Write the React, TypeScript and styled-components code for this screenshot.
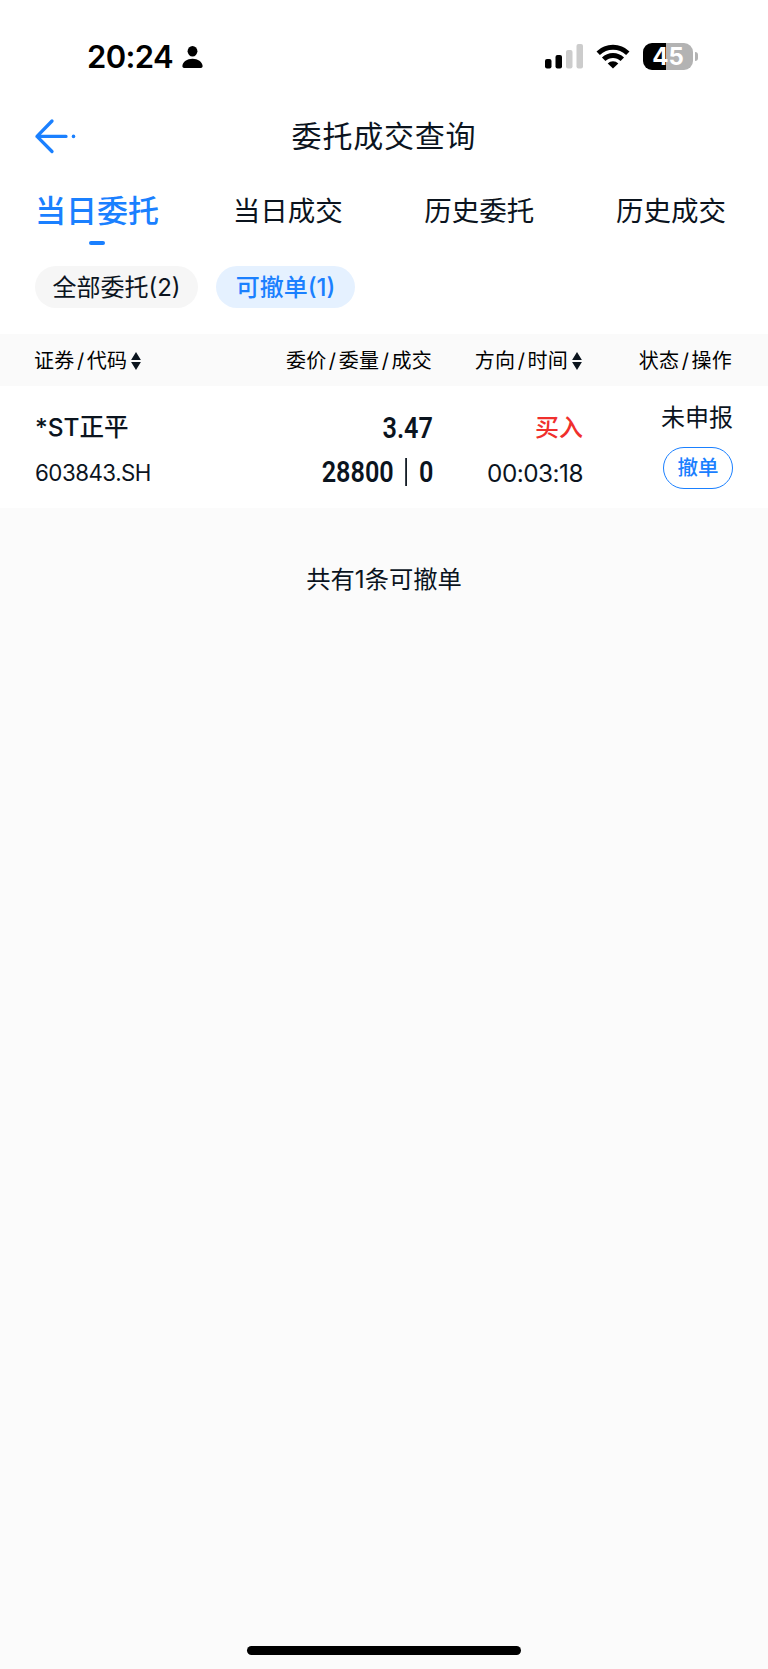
import React, { FC, PropsWithChildren } from "react";
import styled, { createGlobalStyle, css } from "styled-components";

const Color = {
  primary: "#1a80ff",
  primarySoft: "#e5f1ff",
  text: "#0b141e",
  buy: "#f02f2c",
  surface: "#ffffff",
  muted: "#f6f6f6",
  header: "#fafafa",
  page: "#fbfbfb",
};

const FONT_UI = `Inter, "Noto Sans CJK SC", sans-serif`;
const FONT_NUMBER = `Roboto, "Noto Sans CJK SC", sans-serif`;

const GlobalStyle = createGlobalStyle`
  * {
    box-sizing: border-box;
  }

  body {
    margin: 0;
    background: ${Color.page};
    color: ${Color.text};
    font-family: ${FONT_UI};
  }

  button {
    margin: 0;
    padding: 0;
    border: 0;
    background: none;
    color: inherit;
    font: inherit;
    white-space: nowrap;
  }
`;

const Screen = styled.div`
  display: flex;
  flex-direction: column;
  width: 768px;
  height: 1669px;
  background: ${Color.page};
`;

const StatusBar = styled.div`
  display: flex;
  align-items: center;
  justify-content: space-between;
  height: 113px;
  padding: 0 70px 0 87px;
  background: ${Color.surface};
`;

const StatusGroup = styled.div<{ $gap: number }>`
  display: flex;
  align-items: center;
  gap: ${({ $gap }) => $gap}px;
`;

const Clock = styled.span`
  color: #000;
  font-size: 31px;
  font-weight: 600;
  line-height: 36px;
  letter-spacing: -0.6px;
`;

const Battery = styled.div`
  display: flex;
  align-items: center;
  gap: 2px;
`;

const BatteryBody = styled.div<{ $level: number }>`
  width: 50px;
  height: 27px;
  border-radius: 9px;
  background: linear-gradient(
    to right,
    #000 ${({ $level }) => $level}%,
    #b3b3b3 ${({ $level }) => $level}%
  );
  color: #fff;
  font-size: 24px;
  font-weight: 700;
  line-height: 27px;
  text-align: center;
`;

const BatteryCap = styled.div`
  width: 3px;
  height: 9px;
  border-radius: 0 3px 3px 0;
  background: #b3b3b3;
`;

const NavBar = styled.header`
  display: grid;
  grid-template-columns: 100px 1fr 100px;
  align-items: center;
  height: 46px;
  padding: 0 34px;
  background: ${Color.surface};
`;

const BackButton = styled.button`
  display: flex;
`;

const Title = styled.h1`
  margin: 0;
  font-size: 30px;
  font-weight: 400;
  line-height: 44px;
  letter-spacing: 0.8px;
  text-align: center;
`;

const TabBar = styled.nav`
  display: flex;
  justify-content: space-between;
  height: 107px;
  padding: 30px 42px 0 35px;
  background: ${Color.surface};
`;

const Tab = styled.button<{ $active?: boolean }>`
  display: flex;
  flex-direction: column;
  align-items: center;
  gap: 8px;
  height: 60px;
  font-size: 27.5px;
  line-height: 44px;

  ${({ $active }) =>
    $active &&
    css`
      margin-right: -8px;
      color: ${Color.primary};
      font-size: 31px;
      font-weight: 500;

      &::after {
        content: "";
        width: 16px;
        height: 4px;
        border-radius: 2px;
        background: ${Color.primary};
      }
    `}
`;

const FilterBar = styled.div`
  display: flex;
  gap: 18px;
  height: 68px;
  padding: 0 35px;
  background: ${Color.surface};
`;

const Chip = styled.button<{ $active?: boolean; $width: number }>`
  width: ${({ $width }) => $width}px;
  height: 42px;
  border-radius: 21px;
  background: ${({ $active }) => ($active ? Color.primarySoft : Color.muted)};
  color: ${({ $active }) => ($active ? Color.primary : Color.text)};
  font-size: 24px;
  font-weight: ${({ $active }) => ($active ? 500 : 400)};
  line-height: 44px;
`;

const COLUMNS = "180px 218px 150px 150px";

const TableHead = styled.div`
  display: grid;
  grid-template-columns: ${COLUMNS};
  align-items: center;
  height: 52px;
  padding: 2px 35px 0 34px;
  background: ${Color.header};
  color: #000;
  font-size: 20px;
  line-height: 30px;
  letter-spacing: 0.2px;
`;

const HeadCell = styled.div<{ $end?: boolean }>`
  display: flex;
  align-items: center;
  justify-content: ${({ $end }) => ($end ? "flex-end" : "flex-start")};
  gap: 4px;
  white-space: nowrap;
`;

const Slash = styled.span`
  margin: 0 2.5px;
`;

const OrderRow = styled.div`
  display: grid;
  grid-template-columns: ${COLUMNS};
  height: 122px;
  padding: 0 35px;
  background: ${Color.surface};
`;

const Cell = styled.div<{ $end?: boolean }>`
  display: flex;
  flex-direction: column;
  align-items: ${({ $end }) => ($end ? "flex-end" : "flex-start")};
  padding-top: 20px;
  white-space: nowrap;
`;

const Name = styled.div`
  font-size: 24.5px;
  font-weight: 500;
  line-height: 42px;
`;

const Detail = styled.div<{ $size: number; $lineHeight: number }>`
  font-size: ${({ $size }) => $size}px;
  line-height: ${({ $lineHeight }) => $lineHeight}px;
  letter-spacing: -0.5px;
`;

const Figure = styled.div`
  display: flex;
  align-items: center;
  font-family: ${FONT_NUMBER};
  font-size: 29px;
  font-weight: 600;
  line-height: 44px;
  transform: scaleX(0.87);
  transform-origin: right center;
`;

const Divider = styled.span`
  width: 2px;
  height: 28px;
  margin: 0 14px 0 13px;
  background: ${Color.text};
`;

const Direction = styled.div`
  color: ${Color.buy};
  font-size: 24px;
  font-weight: 500;
  line-height: 44px;
`;

const ActionCell = styled(Cell)`
  padding-top: 12px;
`;

const State = styled.div`
  font-size: 24px;
  line-height: 40px;
`;

const CancelButton = styled.button`
  width: 70px;
  height: 42px;
  margin-top: 9px;
  border: 1px solid ${Color.primary};
  border-radius: 21px;
  color: ${Color.primary};
  font-size: 20.5px;
  font-weight: 500;
  line-height: 40px;
`;

const Summary = styled.p`
  flex: 1;
  margin: 0;
  padding-top: 53px;
  font-size: 24.3px;
  line-height: 36px;
  text-align: center;
`;

const HomeIndicator = styled.div`
  align-self: center;
  width: 274px;
  height: 9px;
  margin-bottom: 14px;
  border-radius: 5px;
  background: #000;
`;

const PersonIcon: FC = () => (
  <svg width="21" height="22" viewBox="0 0 21 22">
    <ellipse cx="10.5" cy="5.3" rx="4.9" ry="5.3" />
    <path d="M2.2 22C.8 22 .2 21 .4 19.8.9 16 5 12.8 10.5 12.8S20.1 16 20.6 19.8C20.8 21 20.2 22 18.8 22Z" />
  </svg>
);

const SignalIcon: FC = () => (
  <svg width="38" height="25" viewBox="0 0 38 25">
    <rect x="0" y="15" width="6.5" height="9.5" rx="2" />
    <rect x="10.5" y="11" width="6.5" height="13.5" rx="2" />
    <rect x="21" y="6" width="6.5" height="18.5" rx="2" fill="#ccc" />
    <rect x="31.5" y="0" width="6.5" height="24.5" rx="2" fill="#ccc" />
  </svg>
);

const WifiIcon: FC = () => (
  <svg width="34" height="25" viewBox="0 0 34 25">
    <g fill="none" stroke="#000" strokeWidth="4.9">
      <path d="M2.2 9.2A21.5 21.5 0 0 1 31.8 9.2" />
      <path d="M7.7 15.3A13.2 13.2 0 0 1 26.3 15.3" />
    </g>
    <path d="M17 24.6 11.7 19.5A7.6 7.6 0 0 1 22.3 19.5Z" />
  </svg>
);

const BackIcon: FC = () => (
  <svg width="44" height="36" viewBox="0 0 44 36">
    <path
      d="M18 3 3 18.4 18 33.5M3 18.4H32"
      fill="none"
      stroke={Color.primary}
      strokeWidth="3.3"
      strokeLinecap="round"
      strokeLinejoin="round"
    />
    <circle cx="39.5" cy="18.4" r="1.8" fill={Color.primary} />
  </svg>
);

const SortIcon: FC = () => (
  <svg width="10" height="18" viewBox="0 0 10 18" fill={Color.text}>
    <path d="M5 0 9.9 8H.1ZM5 18 .1 10H9.9Z" />
  </svg>
);

type HeadLabelProps = PropsWithChildren<{
  parts: string[];
  end?: boolean;
}>;

const HeadLabel: FC<HeadLabelProps> = ({ parts, end, children }) => (
  <HeadCell $end={end}>
    <span>
      {parts.map((part, index) => (
        <React.Fragment key={part}>
          {index > 0 && <Slash>/</Slash>}
          {part}
        </React.Fragment>
      ))}
    </span>
    {children}
  </HeadCell>
);

const TABS = ["当日委托", "当日成交", "历史委托", "历史成交"];

export default function App() {
  return (
    <>
      <GlobalStyle />
      <Screen>
        <StatusBar>
          <StatusGroup $gap={9}>
            <Clock>20:24</Clock>
            <PersonIcon />
          </StatusGroup>
          <StatusGroup $gap={13}>
            <SignalIcon />
            <WifiIcon />
            <Battery>
              <BatteryBody $level={45}>45</BatteryBody>
              <BatteryCap />
            </Battery>
          </StatusGroup>
        </StatusBar>
        <NavBar>
          <BackButton aria-label="返回">
            <BackIcon />
          </BackButton>
          <Title>委托成交查询</Title>
        </NavBar>
        <TabBar>
          {TABS.map((tab, index) => (
            <Tab key={tab} $active={index === 0}>
              {tab}
            </Tab>
          ))}
        </TabBar>
        <FilterBar>
          <Chip $width={163}>全部委托(2)</Chip>
          <Chip $width={139} $active>
            可撤单(1)
          </Chip>
        </FilterBar>
        <TableHead>
          <HeadLabel parts={["证券", "代码"]}>
            <SortIcon />
          </HeadLabel>
          <HeadLabel parts={["委价", "委量", "成交"]} end />
          <HeadLabel parts={["方向", "时间"]} end>
            <SortIcon />
          </HeadLabel>
          <HeadLabel parts={["状态", "操作"]} end />
        </TableHead>
        <OrderRow>
          <Cell>
            <Name>*ST正平</Name>
            <Detail $size={22.3} $lineHeight={49}>
              603843.SH
            </Detail>
          </Cell>
          <Cell $end>
            <Figure>3.47</Figure>
            <Figure>
              28800
              <Divider />0
            </Figure>
          </Cell>
          <Cell $end>
            <Direction>买入</Direction>
            <Detail $size={24.3} $lineHeight={46}>
              00:03:18
            </Detail>
          </Cell>
          <ActionCell $end>
            <State>未申报</State>
            <CancelButton>撤单</CancelButton>
          </ActionCell>
        </OrderRow>
        <Summary>共有1条可撤单</Summary>
        <HomeIndicator />
      </Screen>
    </>
  );
}
